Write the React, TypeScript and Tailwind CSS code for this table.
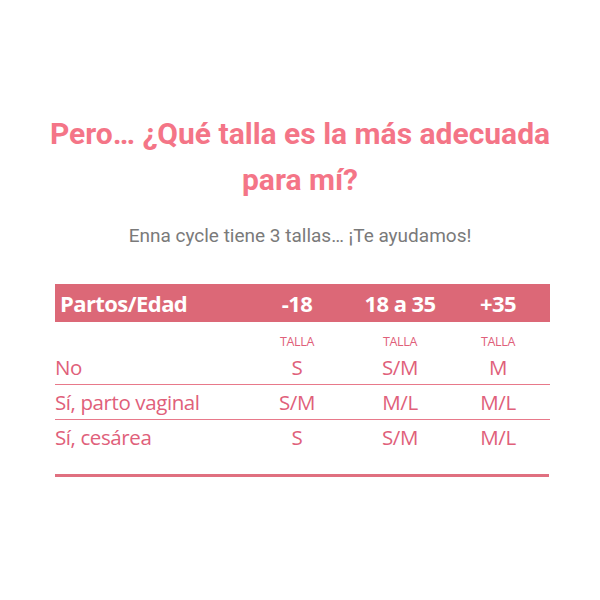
import React from "react";

const rows = [
  { label: "No", v: ["S", "S/M", "M"], line: true },
  { label: "Sí, parto vaginal", v: ["S/M", "M/L", "M/L"], line: true },
  { label: "Sí, cesárea", v: ["S", "S/M", "M/L"], line: false },
];

export default function App() {
  return (
    <div className="w-[600px] h-[600px] bg-white flex flex-col items-center pt-[111px]">
      <h1 className="text-center text-[30px] leading-[46px] font-bold text-[#f47587] font-['Roboto',sans-serif] w-[540px]">
        Pero… ¿Qué talla es la más adecuada para mí?
      </h1>
      <p className="mt-[20px] text-[19px] leading-[26px] text-[#7a7a7a] font-['Roboto',sans-serif]">
        Enna cycle tiene 3 tallas… ¡Te ayudamos!
      </p>
      <div className="mt-[35px] w-[495px] self-start ml-[55px] font-['Open_Sans',sans-serif] text-[#e0607a]">
        <div className="grid grid-cols-[192px_100px_106px_90px_1fr] items-center h-[38px] bg-[#dc6877] text-white text-[22px] font-bold tracking-[-0.6px]">
          <div className="pl-[5px]">Partos/Edad</div>
          <div className="text-center">-18</div>
          <div className="text-center">18 a 35</div>
          <div className="text-center">+35</div>
          <div />
        </div>
        <div className="grid grid-cols-[192px_100px_106px_90px_1fr] h-[16px] mt-[12px] items-center text-[12.5px] leading-none tracking-[-0.3px]">
          <div />
          <div className="text-center">TALLA</div>
          <div className="text-center">TALLA</div>
          <div className="text-center">TALLA</div>
          <div />
        </div>
        {rows.map((r) => (
          <div
            key={r.label}
            className={`grid grid-cols-[192px_100px_106px_90px_1fr] items-center h-[35px] text-[20.5px] font-medium tracking-[-0.4px] ${
              r.line ? "border-b-[1.5px] border-[#e8798a]" : ""
            }`}
          >
            <div>{r.label}</div>
            {r.v.map((x, i) => (
              <div key={i} className="text-center">
                {x}
              </div>
            ))}
            <div />
          </div>
        ))}
        <div className="mt-[19px] h-[3px] w-[494px] bg-[#e07080]" />
      </div>
    </div>
  );
}
